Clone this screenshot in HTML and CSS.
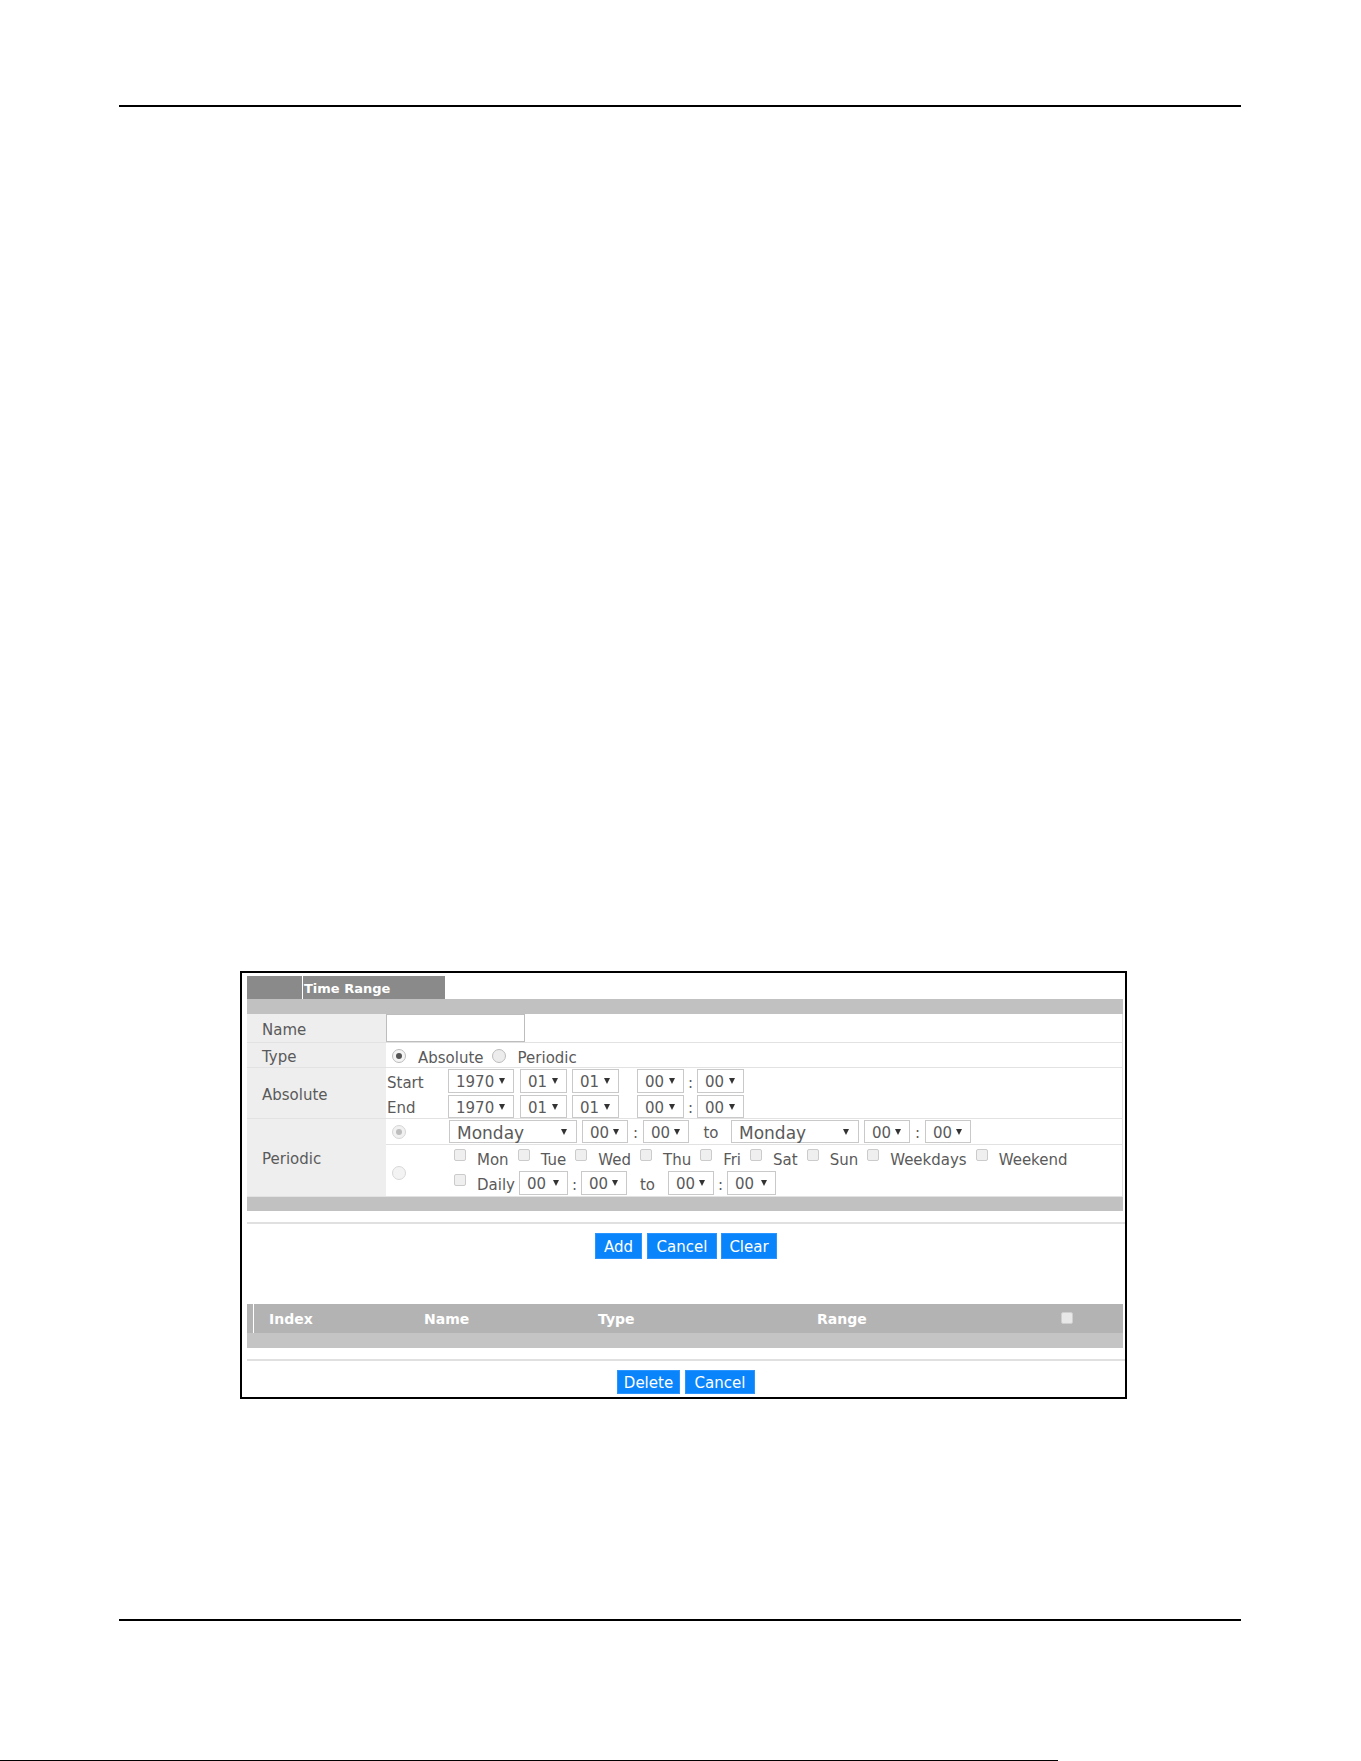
FILE: index.html
```html
<!DOCTYPE html>
<html lang="en">
<head>
<meta charset="utf-8">
<title>Time Range</title>
<link rel="stylesheet" href="styles.css">
</head>
<body>
<div class="page">
  <div class="rule rule-top"></div>

  <section class="panel">
    <div class="tab"><span class="tab-lead"></span><span class="tab-title">Time Range</span></div>
    <div class="band"></div>

    <div class="form">
      <div class="row row-name">
        <div class="lbl">Name</div>
        <div class="val"><input class="text-input" type="text"></div>
      </div>

      <div class="row row-type">
        <div class="lbl">Type</div>
        <div class="val val-type">
          <span class="radio checked"></span><span class="opt">Absolute</span>
          <span class="radio"></span><span class="opt">Periodic</span>
        </div>
      </div>

      <div class="row row-abs">
        <div class="lbl">Absolute</div>
        <div class="val val-abs">
          <div class="abs-line">
            <span class="sub-lbl">Start</span>
            <span class="sel w-year">1970</span>
            <span class="sel w-md gap6">01</span>
            <span class="sel w-md gap5">01</span>
            <span class="sel w-md gap18">00</span><span class="colon">:</span><span class="sel w-md">00</span>
          </div>
          <div class="abs-line">
            <span class="sub-lbl">End</span>
            <span class="sel w-year">1970</span>
            <span class="sel w-md gap6">01</span>
            <span class="sel w-md gap5">01</span>
            <span class="sel w-md gap18">00</span><span class="colon">:</span><span class="sel w-md">00</span>
          </div>
        </div>
      </div>

      <div class="row row-per">
        <div class="lbl">Periodic</div>
        <div class="val val-per">
          <div class="per-line per-one">
            <div class="radio-col"><span class="radio disabled-on"></span></div>
            <div class="per-content">
              <span class="sel sel-day">Monday</span>
              <span class="sel w-hm gap5">00</span><span class="colon c-wide">:</span><span class="sel w-hm">00</span>
              <span class="to to-wide">to</span>
              <span class="sel sel-day">Monday</span>
              <span class="sel w-hm gap5">00</span><span class="colon c-wide">:</span><span class="sel w-hm">00</span>
            </div>
          </div>
          <div class="per-line per-two">
            <div class="radio-col radio-col-low"><span class="radio faint"></span></div>
            <div class="per-content per-stack">
              <div class="days">
                <span class="cb"></span><span class="day">Mon</span>
                <span class="cb"></span><span class="day">Tue</span>
                <span class="cb"></span><span class="day">Wed</span>
                <span class="cb"></span><span class="day">Thu</span>
                <span class="cb"></span><span class="day">Fri</span>
                <span class="cb"></span><span class="day">Sat</span>
                <span class="cb"></span><span class="day">Sun</span>
                <span class="cb"></span><span class="day">Weekdays</span>
                <span class="cb"></span><span class="day">Weekend</span>
              </div>
              <div class="daily">
                <span class="cb"></span><span class="day day-daily">Daily</span>
                <span class="sel w-daily">00</span><span class="colon">:</span><span class="sel w-hm">00</span>
                <span class="to to-daily">to</span>
                <span class="sel w-hm">00</span><span class="colon">:</span><span class="sel w-daily">00</span>
              </div>
            </div>
          </div>
        </div>
      </div>
    </div>

    <div class="band band-low"></div>
    <div class="sep"></div>

    <div class="actions actions-add">
      <button class="btn b-add" type="button">Add</button>
      <button class="btn b-cancel" type="button">Cancel</button>
      <button class="btn b-clear" type="button">Clear</button>
    </div>

    <div class="list-head">
      <span class="head-lead"></span>
      <span class="hc hc-index">Index</span>
      <span class="hc hc-name">Name</span>
      <span class="hc hc-type">Type</span>
      <span class="hc hc-range">Range</span>
      <span class="hc hc-check"><span class="head-cb"></span></span>
    </div>
    <div class="list-band"></div>
    <div class="sep"></div>

    <div class="actions actions-del">
      <button class="btn b-delete" type="button">Delete</button>
      <button class="btn b-cancel2" type="button">Cancel</button>
    </div>
  </section>

  <div class="rule rule-bottom"></div>
  <div class="edge-line"></div>
</div>
</body>
</html>
```

FILE: styles.css
```css
* { box-sizing: border-box; }

html, body {
  margin: 0;
  padding: 0;
  background: #fff;
}

body {
  font-family: "DejaVu Sans", "Liberation Sans", sans-serif;
  font-size: 15px;
  color: #5a5a5a;
}

.page {
  width: 1361px;
  height: 1761px;
  overflow: hidden;
  padding-top: 105px;
}

/* page rules */
.rule {
  height: 2px;
  background: #000;
  width: 1122px;
  margin-left: 119px;
}
.rule-bottom { margin-top: 220px; }

.edge-line {
  margin-top: 139px;
  width: 1058px;
  height: 1px;
  background: #000;
}

/* framed panel */
.panel {
  margin-top: 864px;
  margin-left: 240px;
  width: 887px;
  height: 428px;
  border: 2px solid #000;
  padding: 3px 0 3px 5px;
  background: #fff;
}

.tab {
  width: 198px;
  height: 23px;
  background: #8a8a8a;
  display: flex;
  align-items: stretch;
}
.tab-lead {
  width: 56px;
  border-right: 1px solid #fff;
}
.tab-title {
  display: flex;
  align-items: center;
  padding-left: 1px;
  padding-top: 1px;
  color: #fff;
  font-weight: bold;
  font-size: 13px;
}

.band {
  height: 15px;
  background: #c1c1c1;
  margin-right: 2px;
}
.band-low { height: 14px; }

/* form table */
.form {
  margin-right: 2px;
  border-right: 1px solid #dedede;
}

.row {
  display: flex;
  border-bottom: 1px solid #e2e2e2;
}

.lbl {
  width: 139px;
  flex: none;
  background: #eeeeee;
  padding-left: 15px;
  padding-top: 3px;
  display: flex;
  align-items: center;
}

.val {
  flex: 1;
  display: flex;
  align-items: center;
}

.row-name { height: 29px; }
.row-type { height: 25px; }
.row-abs { height: 51px; }
.row-per { height: 78px; }

.text-input {
  width: 139px;
  height: 28px;
  border: 1px solid #bdbdbd;
  margin: 0;
  padding: 0 4px;
  font: inherit;
  align-self: flex-start;
}

/* radios */
.radio {
  width: 14px;
  height: 14px;
  border-radius: 50%;
  border: 1px solid #bcbcbc;
  background: #ececec;
  display: inline-flex;
  align-items: center;
  justify-content: center;
  flex: none;
}
.radio.checked {
  background: #f4f4f4;
}
.radio.checked::after {
  content: "";
  width: 6px;
  height: 6px;
  border-radius: 50%;
  background: #555;
}
.radio.disabled-on {
  border-color: #d6d6d6;
  background: #f1f1f1;
}
.radio.disabled-on::after {
  content: "";
  width: 6px;
  height: 6px;
  border-radius: 50%;
  background: #bdbdbd;
}
.radio.faint {
  border-color: #d8d8d8;
  background: #f3f3f3;
}

.val-type { padding-left: 6px; padding-top: 2px; }
.val-type .opt { margin-left: 12px; margin-right: 8px; padding-top: 3px; }

/* select-like boxes */
.sel {
  display: inline-flex;
  align-items: center;
  justify-content: space-between;
  height: 24px;
  border: 1px solid #c9c9c9;
  background: #fff;
  padding: 2px 8px 0 7px;
  font-size: 15px;
  flex: none;
}
.sel::after {
  content: "";
  width: 0;
  height: 0;
  border-left: 3.5px solid transparent;
  border-right: 3.5px solid transparent;
  border-top: 6px solid #333;
  margin-left: 4px;
  margin-top: -2px;
}

.w-year { width: 66px; }
.w-md { width: 47px; }
.w-hm { width: 46px; }
.w-daily { width: 49px; }
.gap5 { margin-left: 5px; }
.gap6 { margin-left: 6px; }
.gap18 { margin-left: 18px; }

.colon {
  width: 13px;
  text-align: center;
  flex: none;
  padding-top: 3px;
}
.c-wide { width: 15px; }

/* absolute block */
.val-abs {
  flex-direction: column;
  align-items: stretch;
  justify-content: flex-start;
  padding-top: 1px;
  gap: 2px;
}
.abs-line {
  display: flex;
  align-items: center;
  height: 24px;
}
.abs-line + .abs-line { height: 23px; }
.abs-line + .abs-line .sel { height: 23px; }
.sub-lbl {
  width: 62px;
  padding-left: 1px;
  padding-top: 3px;
  flex: none;
}

/* periodic block */
.val-per {
  flex-direction: column;
  align-items: stretch;
}
.per-line {
  display: flex;
}
.per-one {
  height: 26px;
  border-bottom: 1px solid #e2e2e2;
}
.per-two { flex: 1; }

.radio-col {
  width: 63px;
  flex: none;
  display: flex;
  align-items: center;
  padding-left: 6px;
}
.radio-col-low { padding-top: 4px; }

.per-content {
  flex: 1;
  display: flex;
  align-items: center;
}
.per-one .sel { height: 23px; }

.sel-day {
  width: 128px;
  font-size: 17px;
  padding-right: 9px;
}

.to {
  flex: none;
  text-align: center;
  padding-top: 3px;
}
.to-wide { width: 42px; padding-left: 2px; }
.to-daily { width: 41px; }

.per-stack {
  flex-direction: column;
  align-items: stretch;
  padding-left: 5px;
}
.days {
  height: 26px;
  display: flex;
  align-items: center;
}
.daily {
  height: 24px;
  display: flex;
  align-items: center;
}

.cb {
  width: 12px;
  height: 12px;
  border: 1px solid #cbcbcb;
  border-radius: 2px;
  background: #efefef;
  flex: none;
  margin-right: 11px;
  position: relative;
  top: -3px;
}
.day { margin-right: 9px; padding-top: 3px; }
.day-daily { margin-right: 4px; }

/* separators and action buttons */
.sep {
  height: 2px;
  background: #e0e0e0;
  margin-top: 11px;
}

.actions {
  display: flex;
  justify-content: center;
  gap: 5px;
  margin-top: 9px;
}

.btn {
  height: 26px;
  border: 1px solid #2a95ff;
  background: #0a84fb;
  color: #fff;
  font: inherit;
  font-size: 15px;
  padding: 2px 0 0;
  margin: 0;
  display: inline-flex;
  align-items: center;
  justify-content: center;
}
.b-add { width: 47px; }
.b-cancel { width: 70px; }
.b-clear { width: 56px; margin-left: -1px; }
.actions-del .btn { height: 24px; }
.b-delete { width: 63px; }
.b-cancel2 { width: 70px; }

/* list header */
.list-head {
  margin-top: 45px;
  margin-right: 2px;
  height: 29px;
  background: #b3b3b3;
  display: flex;
  align-items: center;
}
.head-lead {
  align-self: stretch;
  width: 7px;
  border-right: 1px solid #fff;
  flex: none;
}
.hc {
  color: #fff;
  font-weight: bold;
  font-size: 14px;
  flex: none;
}
.hc-index { width: 170px; padding-left: 15px; }
.hc-name { width: 174px; }
.hc-type { width: 219px; }
.hc-range { width: 244px; }
.hc-check { display: flex; align-items: center; }
.head-cb {
  width: 12px;
  height: 12px;
  border-radius: 2px;
  background: #e8e8e8;
  border: 1px solid #cfcfcf;
  position: relative;
  top: -1px;
}

.list-band {
  height: 15px;
  background: #c4c4c4;
  margin-right: 2px;
}
```
